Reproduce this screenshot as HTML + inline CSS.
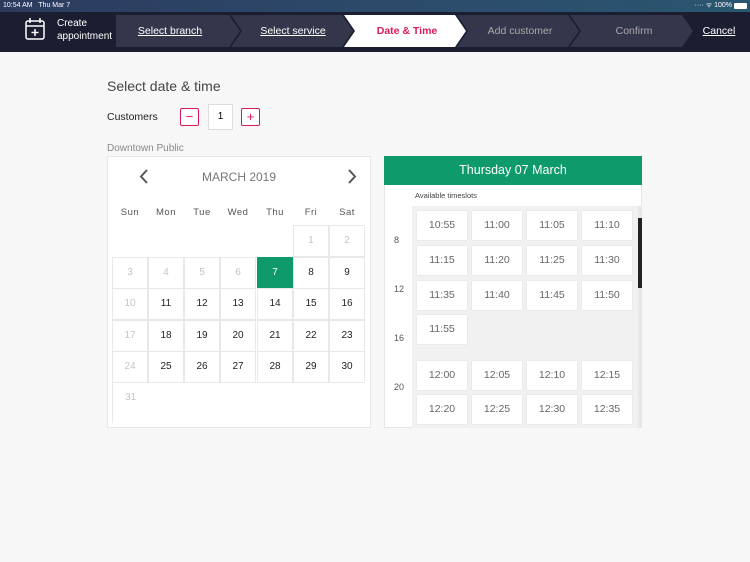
<!DOCTYPE html>
<html><head><meta charset="utf-8">
<style>
*{box-sizing:border-box;margin:0;padding:0}
body{width:750px;height:562px;background:#f7f7f7;font-family:"Liberation Sans",sans-serif;position:relative;overflow:hidden}
.abs{position:absolute}
.status{left:0;top:0;width:750px;height:12px;background:linear-gradient(90deg,#2c3a5e,#2c4a6a 50%,#2a5670);color:#fff;font-size:7px;line-height:12px}
.nav{left:0;top:12px;width:750px;height:40px;background:#1b1d30}
.step{top:15px;height:32px;color:#fff;font-size:10.5px;line-height:32px;text-align:center}
.cal{left:107px;top:156px;width:264px;height:272px;background:#fff;border:1px solid #e6e6e6}
.cell{position:absolute;width:36px;height:32px;border:1px solid #e8e8e8;font-size:10px;text-align:center;line-height:30px;color:#222;background:#fff}
.cell.g{color:#c4c4c4}
.dow{position:absolute;top:207px;width:36px;text-align:center;font-size:9.5px;color:#555;letter-spacing:.5px}
.slot{position:absolute;width:50px;height:29px;background:#fff;font-size:10.5px;color:#666;text-align:center;line-height:29px;box-shadow:0 0 1px rgba(0,0,0,.15)}
.hr{position:absolute;left:394px;font-size:9px;color:#555}
</style></head><body>
<div class="abs status"><span style="margin-left:3px">10:54 AM&nbsp;&nbsp; Thu Mar 7</span><span style="position:absolute;right:18px">···· ᯤ 100%</span><span style="position:absolute;right:3px;top:3px;width:13px;height:6px;background:#fff;border-radius:1px"></span></div>
<div class="abs nav"></div>
<svg class="abs" style="left:24px;top:17px" width="22" height="24" viewBox="0 0 22 24" fill="none" stroke="#fff" stroke-width="1.5"><rect x="2" y="4" width="18" height="18" rx="2"/><line x1="2" y1="9" x2="20" y2="9"/><line x1="6" y1="1" x2="6" y2="6"/><line x1="16" y1="1" x2="16" y2="6"/><line x1="11" y1="12" x2="11" y2="19"/><line x1="7.5" y1="15.5" x2="14.5" y2="15.5"/></svg>
<div class="abs" style="left:57px;top:17px;color:#fff;font-size:10px;line-height:13px">Create<br>appointment</div>
<svg class="abs" style="left:116px;top:15px" width="580" height="32">
<polygon points="0,0 113,0 124,16 113,32 0,32" fill="#34364b"/>
<polygon points="115,0 226,0 237,16 226,32 115,32 126,16" fill="#34364b"/>
<polygon points="228,0 339,0 350,16 339,32 228,32 239,16" fill="#ffffff"/>
<polygon points="341,0 452,0 463,16 452,32 341,32 352,16" fill="#34364b"/>
<polygon points="454,0 566,0 577,16 566,32 454,32 465,16" fill="#34364b"/>
</svg>
<div class="abs step" style="left:116px;width:108px;text-decoration:underline">Select branch</div>
<div class="abs step" style="left:240px;width:106px;text-decoration:underline">Select service</div>
<div class="abs step" style="left:355px;width:104px;color:#d8195b;font-weight:bold">Date &amp; Time</div>
<div class="abs step" style="left:468px;width:104px;color:#aaa">Add customer</div>
<div class="abs step" style="left:582px;width:104px;color:#aaa">Confirm</div>
<div class="abs step" style="left:700px;width:38px;text-decoration:underline">Cancel</div>

<div class="abs" style="left:107px;top:78px;font-size:14px;color:#444">Select date &amp; time</div>
<div class="abs" style="left:107px;top:111px;font-size:10.5px;color:#222">Customers</div>
<div class="abs" style="left:180px;top:108px;width:19px;height:18px;border:1px solid #d8195b;border-radius:2px;color:#d8195b;text-align:center;line-height:15px;font-size:13px;background:#fff">−</div>
<div class="abs" style="left:208px;top:104px;width:25px;height:26px;border:1px solid #ddd;background:#fff;text-align:center;line-height:24px;font-size:10px">1</div>
<div class="abs" style="left:241px;top:108px;width:19px;height:18px;border:1px solid #d8195b;border-radius:2px;color:#d8195b;text-align:center;line-height:15px;font-size:13px;background:#fff">+</div>
<div class="abs" style="left:107px;top:143px;font-size:10px;color:#888">Downtown Public</div>

<div class="abs cal"></div>
<svg class="abs" style="left:139px;top:169px" width="10" height="15"><polyline points="8,1 2,7.5 8,14" fill="none" stroke="#555" stroke-width="2"/></svg>
<svg class="abs" style="left:347px;top:169px" width="10" height="15"><polyline points="2,1 8,7.5 2,14" fill="none" stroke="#555" stroke-width="2"/></svg>
<div class="abs" style="left:180px;top:170px;width:118px;text-align:center;font-size:12px;color:#777">MARCH 2019</div>
<div class="dow" style="left:112px">Sun</div><div class="dow" style="left:148px">Mon</div><div class="dow" style="left:184px">Tue</div><div class="dow" style="left:220px">Wed</div><div class="dow" style="left:257px">Thu</div><div class="dow" style="left:293px">Fri</div><div class="dow" style="left:329px">Sat</div>
<div id="cal"></div>

<div class="abs" style="left:384px;top:156px;width:258px;height:272px;background:#fff;border:1px solid #e6e6e6"></div>
<div class="abs" style="left:384px;top:156px;width:258px;height:29px;background:#0f9a6c;color:#fff;font-size:12.5px;text-align:center;line-height:29px">Thursday 07 March</div>
<div class="abs" style="left:415px;top:191px;font-size:7.5px;color:#444">Available timeslots</div>
<div class="abs" style="left:412px;top:206px;width:226px;height:222px;background:#f1f1f1"></div>
<div class="abs" style="left:638px;top:206px;width:4px;height:222px;background:#e8e8e8"></div>
<div class="abs" style="left:638px;top:218px;width:4px;height:70px;background:#222"></div>
<div class="hr" style="top:235px">8</div><div class="hr" style="top:284px">12</div><div class="hr" style="top:333px">16</div><div class="hr" style="top:382px">20</div>
<div id="slots"></div>
<script>
var c='',xs=[112,148,184,220,257,293,329],ys=[225,257,288,320,351,383];
for(var d=1;d<=31;d++){var i=d+4,r=Math.floor(i/7),col=i%7;var g=(d<7||col==0);
var st='left:'+xs[col]+'px;top:'+ys[r]+'px;';
if(d==7)st+='background:#0f9a6c;color:#fff;border-color:#0f9a6c;';
if(d==31)st+='border:none;border-left:1px solid #e8e8e8;height:40px;';
c+='<div class="cell'+(g?' g':'')+'" style="'+st+'">'+d+'</div>';}
document.getElementById('cal').innerHTML=c;
var s='',sx=[417,472,527,582],sy=[211,246,281,315,361,395],t=['10:55','11:00','11:05','11:10','11:15','11:20','11:25','11:30','11:35','11:40','11:45','11:50','11:55',null,null,null,'12:00','12:05','12:10','12:15','12:20','12:25','12:30','12:35'];
for(var k=0;k<t.length;k++){if(!t[k])continue;s+='<div class="slot" style="left:'+sx[k%4]+'px;top:'+sy[Math.floor(k/4)]+'px">'+t[k]+'</div>';}
document.getElementById('slots').innerHTML=s;
</script>
</body></html>
